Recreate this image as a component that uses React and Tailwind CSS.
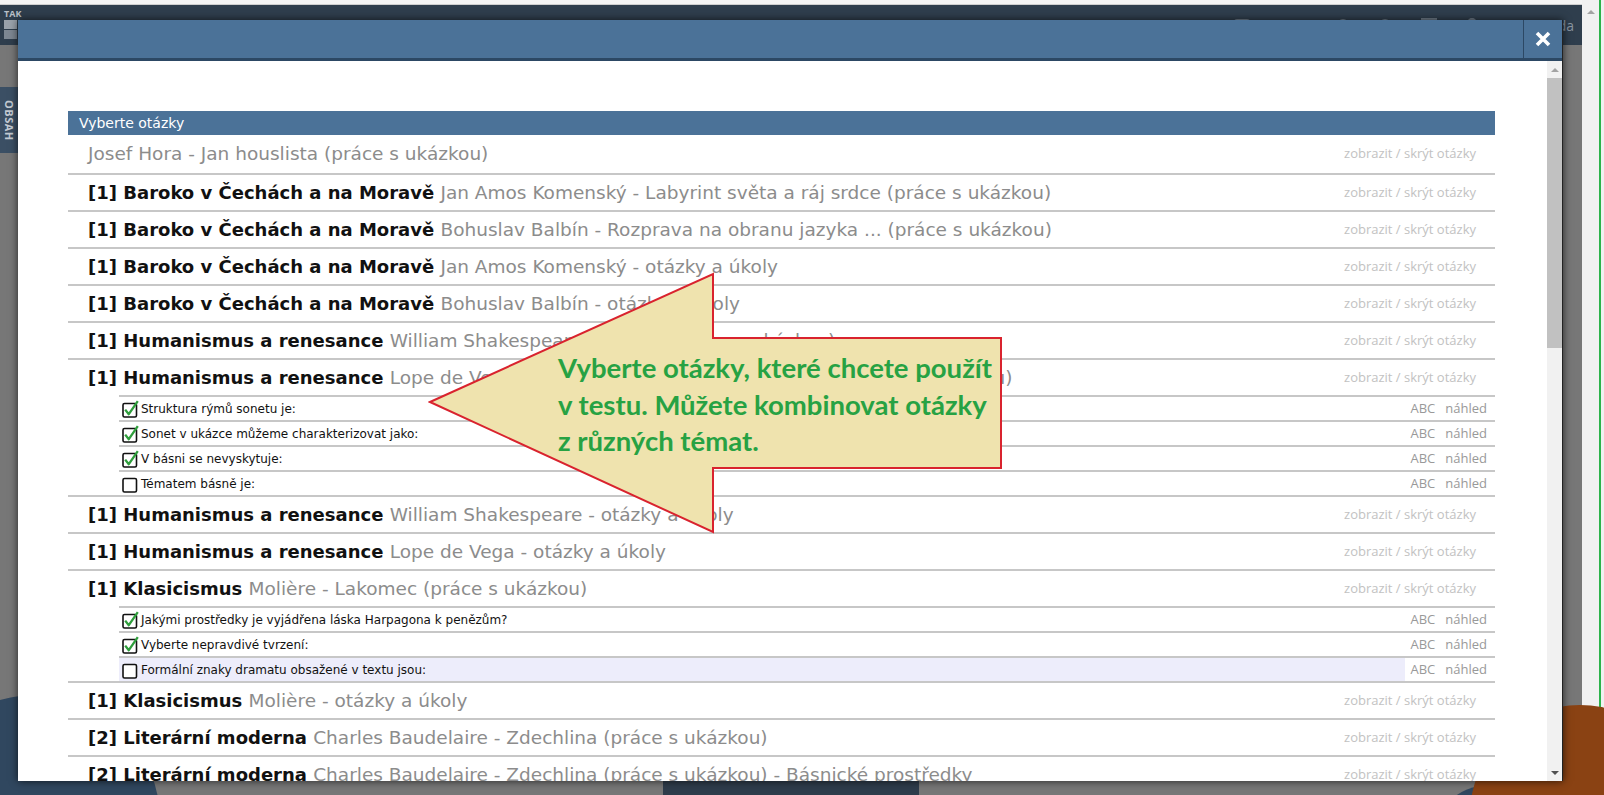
import React from 'react'

const groups = [
  { title: 'Josef Hora - Jan houslista (práce s ukázkou)', first: true },
  { num: 1, topic: 'Baroko v Čechách a na Moravě', title: 'Jan Amos Komenský - Labyrint světa a ráj srdce (práce s ukázkou)' },
  { num: 1, topic: 'Baroko v Čechách a na Moravě', title: 'Bohuslav Balbín - Rozprava na obranu jazyka ... (práce s ukázkou)' },
  { num: 1, topic: 'Baroko v Čechách a na Moravě', title: 'Jan Amos Komenský - otázky a úkoly' },
  { num: 1, topic: 'Baroko v Čechách a na Moravě', title: 'Bohuslav Balbín - otázky a úkoly' },
  { num: 1, topic: 'Humanismus a renesance', title: 'William Shakespeare - Sonety (práce s ukázkou)' },
  {
    num: 1,
    topic: 'Humanismus a renesance',
    title: 'Lope de Vega - Sonet o sonetu, znělka na prosbu (práce s ukázkou)',
    questions: [
      { text: 'Struktura rýmů sonetu je:', checked: true },
      { text: 'Sonet v ukázce můžeme charakterizovat jako:', checked: true },
      { text: 'V básni se nevyskytuje:', checked: true },
      { text: 'Tématem básně je:', checked: false },
    ],
  },
  { num: 1, topic: 'Humanismus a renesance', title: 'William Shakespeare - otázky a úkoly' },
  { num: 1, topic: 'Humanismus a renesance', title: 'Lope de Vega - otázky a úkoly' },
  {
    num: 1,
    topic: 'Klasicismus',
    title: 'Molière - Lakomec (práce s ukázkou)',
    questions: [
      { text: 'Jakými prostředky je vyjádřena láska Harpagona k penězům?', checked: true },
      { text: 'Vyberte nepravdivé tvrzení:', checked: true },
      { text: 'Formální znaky dramatu obsažené v textu jsou:', checked: false, hover: true },
    ],
  },
  { num: 1, topic: 'Klasicismus', title: 'Molière - otázky a úkoly' },
  { num: 2, topic: 'Literární moderna', title: 'Charles Baudelaire - Zdechlina (práce s ukázkou)' },
  { num: 2, topic: 'Literární moderna', title: 'Charles Baudelaire - Zdechlina (práce s ukázkou) - Básnické prostředky' },
]

const Checkbox = ({ checked }) => (
  <svg width="18" height="18" viewBox="0 0 18 18" className="shrink-0">
    <rect x="1" y="3.5" width="13.5" height="13.5" rx="1.5" fill="#fff" stroke="#111" strokeWidth="1.6" />
    {checked && (
      <path d="M3.2 9.6 L6.8 14.2 L15.8 1.2" fill="none" stroke="#2f9e3c" strokeWidth="2.3" strokeLinejoin="round" />
    )}
  </svg>
)

const QuestionRow = ({ q }) => (
  <div className="flex h-[25px] border-t-2 border-[#c7c7c7]">
    <div className={`flex flex-1 items-center gap-[1px] pl-[3px] ${q.hover ? 'bg-[#ededfb]' : ''}`}>
      <Checkbox checked={q.checked} />
      <span className="text-[12px] text-[#111] font-['DejaVu_Sans',sans-serif]">{q.text}</span>
    </div>
    <div className="flex w-[90px] items-center justify-end gap-[10px] pr-[8px] text-[13px] text-[#999] font-['Open_Sans',sans-serif]">
      <span>ABC</span>
      <span>náhled</span>
    </div>
  </div>
)

const GroupRow = ({ g }) => (
  <div className={g.questions ? 'border-b-2 border-[#c7c7c7]' : ''}>
    <div
      className={`flex items-center justify-between pl-[20px] pr-[19px] ${g.first ? 'h-[38px]' : 'h-[35px]'} ${
        g.questions ? '' : 'border-b-2 border-[#c7c7c7] box-content'
      }`}
    >
      <div className="whitespace-nowrap font-['DejaVu_Sans',sans-serif]">
        {g.topic && <b className="text-[18px] text-[#111]">[{g.num}] {g.topic} </b>}
        <span className="text-[18.5px] text-[#8c8c8c]">{g.title}</span>
      </div>
      <span className="whitespace-nowrap text-[13px] text-[#c2c2c2] font-['Open_Sans',sans-serif]">
        zobrazit / skrýt otázky
      </span>
    </div>
    {g.questions && (
      <div className="ml-[51px]">
        {g.questions.map((q, i) => (
          <QuestionRow key={i} q={q} />
        ))}
      </div>
    )}
  </div>
)

const App = () => {
  return (
    <div className="relative flex h-[795px] w-[1604px] overflow-hidden bg-[#f1f1f1] font-['Open_Sans',sans-serif]">
      {/* page behind the dialog */}
      <div className="relative flex w-[1582px] flex-col bg-[#777777]">
        <div className="h-[5px] bg-[#f4f4f4] border-b border-[#cfcfcf]" />
        <div className="flex h-[40px] items-center gap-[30px] bg-[#2f3e4d] pl-[4px] pr-[8px] text-[14px] text-[#6f7c89]">
          <div className="flex h-[32px] w-[26px] flex-col text-[9px] font-bold leading-[9px] text-[#b9c0c8]">
            <span>TAK</span>
            <div className="mt-[2px] grid grid-cols-2 gap-[1px]">
              <div className="h-[9px] bg-[#9aa2ab]" />
              <div className="h-[9px] bg-[#7d8792]" />
              <div className="h-[9px] bg-[#7d8792]" />
              <div className="h-[9px] bg-[#9aa2ab]" />
            </div>
          </div>
          <span>Obsah kapitoly</span>
          <span>TAKTIK</span>
          <span>Literatura - čítanka pro střední školy</span>
          <div className="flex-1" />
          <span className="h-[12px] w-[16px] rounded-[3px] border-2 border-[#6f7c89]" />
          <span>90%</span>
          <span className="h-[12px] w-[12px] rounded-full border-2 border-[#6f7c89]" />
          <span className="h-[12px] w-[12px] rounded-full border-2 border-[#6f7c89]" />
          <span className="h-[14px] w-[16px] border-2 border-[#6f7c89]" />
          <span className="h-[14px] w-[10px] rounded-t-full border-2 border-[#6f7c89]" />
          <span className="text-[#8a96a2]">Nápověda</span>
        </div>
        <div className="relative flex-1">
          <div className="absolute left-0 top-[42px] flex h-[66px] w-[18px] items-center justify-center bg-[#3b4f64] text-[11px] font-bold tracking-[0.5px] text-[#c3cad2] [writing-mode:vertical-rl]">
            OBSAH
          </div>
          <div className="absolute left-[-90px] top-[650px] h-[250px] w-[250px] rounded-full bg-[#30475f]" />
          <div className="absolute left-[663px] top-[732px] h-[30px] w-[256px] border-t border-[#556] bg-[#2e3c4b]" />
          <div className="absolute left-[1430px] top-[740px] h-[120px] w-[120px] rounded-full bg-[#30475f]" />
          <div className="absolute left-[1470px] top-[660px] h-[220px] w-[220px] rounded-full bg-[#8a4213]" />
        </div>
      </div>
      {/* browser scrollbar */}
      <div className="flex w-[17px] flex-col items-center justify-between bg-[#f1f1f1] py-[10px]">
        <div className="h-0 w-0 border-x-[4px] border-b-[4px] border-x-transparent border-b-[#a3a3a3]" />
        <div className="h-0 w-0 border-x-[4px] border-t-[4px] border-x-transparent border-t-[#a3a3a3]" />
      </div>
      <div className="w-[2px] bg-[#2cb34b]" />
      <div className="w-[3px] bg-[#f1f1f1]" />

      {/* dialog */}
      <div className="absolute left-[18px] top-[20px] flex h-[761px] w-[1545px] flex-col border-r border-[#222] bg-white shadow-[0_0_8px_rgba(0,0,0,0.7)]">
        <div className="flex h-[41px] shrink-0 border-b-[3px] border-[#2c4864] bg-[#4b7298]">
          <div className="flex-1" />
          <div className="flex w-[39px] items-center justify-center border-l border-[#2c4864]">
            <svg width="16" height="16" viewBox="0 0 16 16">
              <path d="M2 2 L14 14 M14 2 L2 14" stroke="#fff" strokeWidth="3.6" />
            </svg>
          </div>
        </div>
        <div className="flex min-h-0 flex-1">
          <div className="min-w-0 flex-1 overflow-hidden pl-[50px] pr-[52px] pt-[50px]">
            <div className="flex h-[24px] items-center bg-[#4b7298] pl-[11px] text-[14px] text-white font-['DejaVu_Sans',sans-serif]">
              Vyberte otázky
            </div>
            {groups.map((g, i) => (
              <GroupRow key={i} g={g} />
            ))}
          </div>
          <div className="flex w-[15px] flex-col bg-[#f1f1f1]">
            <div className="flex h-[17px] items-center justify-center">
              <div className="h-0 w-0 border-x-[4px] border-b-[4px] border-x-transparent border-b-[#a3a3a3]" />
            </div>
            <div className="h-[270px] bg-[#c1c1c1]" />
            <div className="flex-1" />
            <div className="flex h-[17px] items-center justify-center">
              <div className="h-0 w-0 border-x-[4px] border-t-[4px] border-x-transparent border-t-[#505050]" />
            </div>
          </div>
        </div>
      </div>

      {/* callout arrow */}
      <svg className="absolute left-[428px] top-[272px]" width="576" height="262" viewBox="0 0 576 262">
        <polygon
          points="2,130 285,2 285,66 573,66 573,196 285,196 285,260"
          fill="#efe3ae"
          stroke="#d9232e"
          strokeWidth="2"
          strokeLinejoin="miter"
        />
      </svg>
      <div className="absolute left-[558px] top-[350px] text-[27.5px] font-bold leading-[36.5px] text-[#27a243] font-['Lato',sans-serif]">
        <div>Vyberte otázky, které chcete použít</div>
        <div>v testu. Můžete kombinovat otázky</div>
        <div>z různých témat.</div>
      </div>
    </div>
  )
}

export default App
